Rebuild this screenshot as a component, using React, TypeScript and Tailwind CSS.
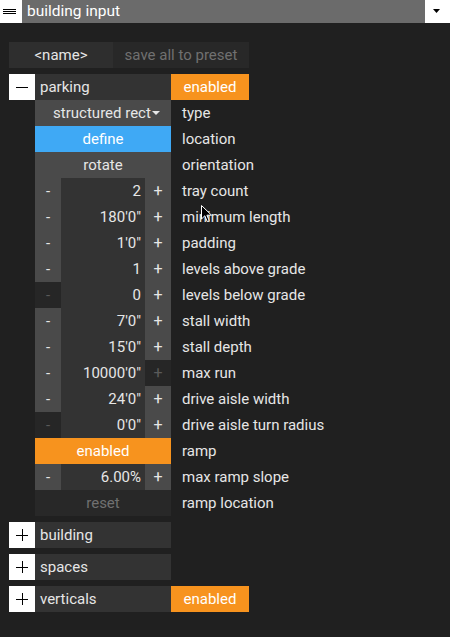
import React from "react";

const font = { fontFamily: "Roboto, 'Noto Sans', sans-serif" };

function Stepper({ value, label, minusOff, plusOff }: { value: string; label: string; minusOff?: boolean; plusOff?: boolean }) {
  return (
    <div className="flex h-[26px] items-center">
      <div className={`w-[26px] h-full flex items-center justify-center text-[15px] ${minusOff ? "bg-[#262626] text-[#5a5a5a]" : "bg-[#4a4a4a] text-[#e6e6e6]"}`}>-</div>
      <div className="w-[84px] h-full flex items-center justify-end pr-[4px] bg-[#333333] text-[#e6e6e6] text-[15px]">{value}</div>
      <div className={`w-[26px] h-full flex items-center justify-center text-[16px] ${plusOff ? "bg-[#262626] text-[#5a5a5a]" : "bg-[#4a4a4a] text-[#e6e6e6]"}`}>+</div>
      <div className="pl-[11px] text-[#e6e6e6] text-[15px] whitespace-nowrap">{label}</div>
    </div>
  );
}

function Row({ children, cls, label }: { children: React.ReactNode; cls: string; label: string }) {
  return (
    <div className="flex h-[26px] items-center">
      <div className={`w-[136px] h-full flex items-center justify-center text-[15px] ${cls}`}>{children}</div>
      <div className="pl-[11px] text-[#e6e6e6] text-[15px] whitespace-nowrap">{label}</div>
    </div>
  );
}

function Toggle({ open }: { open?: boolean }) {
  return (
    <div className="w-[26px] h-[26px] bg-white flex items-center justify-center">
      <svg width="26" height="26" viewBox="0 0 26 26">
        <line x1="7" y1="13.5" x2="19" y2="13.5" stroke="#000" strokeWidth="1" />
        {!open && <line x1="13.5" y1="7" x2="13.5" y2="19" stroke="#000" strokeWidth="1" />}
      </svg>
    </div>
  );
}

function Header({ name, open, enabled }: { name: string; open?: boolean; enabled?: boolean }) {
  return (
    <div className="flex h-[26px] items-center">
      <Toggle open={open} />
      <div className="w-[136px] h-full flex items-center pl-[5px] bg-[#333333] text-[#e6e6e6] text-[15px]">{name}</div>
      {enabled && <div className="w-[78px] h-full flex items-center justify-center bg-[#f7931e] text-white text-[15px]">enabled</div>}
    </div>
  );
}

export default function App() {
  return (
    <div className="relative w-[450px] h-[637px] bg-[#202020] overflow-hidden" style={font}>
      <div className="flex h-[23px]">
        <div className="w-[22px] h-full bg-white flex items-center justify-center">
          <svg width="22" height="23" viewBox="0 0 22 23">
            <rect x="3" y="9" width="13" height="1" fill="#000" />
            <rect x="3" y="11" width="13" height="1" fill="#000" />
            <rect x="3" y="13" width="13" height="1" fill="#000" />
          </svg>
        </div>
        <div className="flex-1 h-full bg-[#6b6b6b] text-white text-[15.5px] flex items-center pl-[5px]">building input</div>
        <div className="w-[25px] h-full bg-white flex items-center justify-center">
          <svg width="25" height="23" viewBox="0 0 25 23">
            <polygon points="8,9 15,9 11.5,13" fill="#000" />
          </svg>
        </div>
      </div>

      <div className="pl-[9px] pt-[19px] flex flex-col">
        <div className="flex h-[26px]">
          <div className="w-[104px] h-full flex items-center justify-center bg-[#2e2e2e] text-[#e6e6e6] text-[15px]">&lt;name&gt;</div>
          <div className="w-[136px] h-full flex items-center justify-center bg-[#282828] text-[#707070] text-[15px]">save all to preset</div>
        </div>

        <div className="mt-[6px]">
          <Header name="parking" open enabled />
          <div className="pl-[26px] flex flex-col">
            <Row cls="bg-[#4a4a4a] text-[#e6e6e6] pl-[8px]" label="type">
              <span>structured rect</span>
              <svg width="9" height="6" viewBox="0 0 9 6" className="ml-[1px]"><polygon points="0,1 8,1 4,5" fill="#e6e6e6" /></svg>
            </Row>
            <Row cls="bg-[#3fa9f5] text-white" label="location">define</Row>
            <Row cls="bg-[#4a4a4a] text-[#e6e6e6]" label="orientation">rotate</Row>
            <Stepper value="2" label="tray count" />
            <Stepper value={"180'0\""} label="minimum length" />
            <Stepper value={"1'0\""} label="padding" />
            <Stepper value="1" label="levels above grade" />
            <Stepper value="0" label="levels below grade" minusOff />
            <Stepper value={"7'0\""} label="stall width" />
            <Stepper value={"15'0\""} label="stall depth" />
            <Stepper value={"10000'0\""} label="max run" plusOff />
            <Stepper value={"24'0\""} label="drive aisle width" />
            <Stepper value={"0'0\""} label="drive aisle turn radius" minusOff />
            <Row cls="bg-[#f7931e] text-white" label="ramp">enabled</Row>
            <Stepper value="6.00%" label="max ramp slope" />
            <Row cls="bg-[#282828] text-[#707070]" label="ramp location">reset</Row>
          </div>
        </div>

        <div className="mt-[6px]"><Header name="building" /></div>
        <div className="mt-[6px]"><Header name="spaces" /></div>
        <div className="mt-[6px]"><Header name="verticals" enabled /></div>
      </div>

      <svg className="absolute left-[201px] top-[205px]" width="12" height="18" viewBox="0 0 12 18">
        <path d="M0.5 0.5 L0.5 14 L3.8 10.8 L6.2 16.5 L8.2 15.6 L5.9 10.2 L10.5 10.2 Z" fill="#000" stroke="#fff" strokeWidth="1" />
      </svg>
    </div>
  );
}
